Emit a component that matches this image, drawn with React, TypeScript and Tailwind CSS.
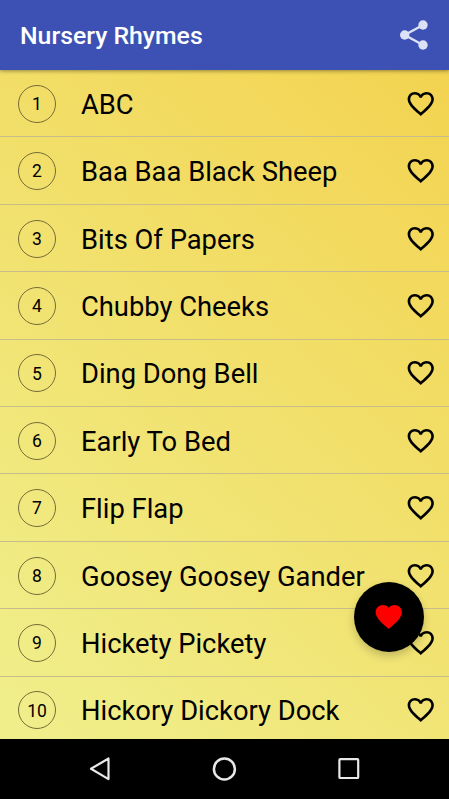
import { useState } from 'react';

const rhymes = [
  'ABC',
  'Baa Baa Black Sheep',
  'Bits Of Papers',
  'Chubby Cheeks',
  'Ding Dong Bell',
  'Early To Bed',
  'Flip Flap',
  'Goosey Goosey Gander',
  'Hickety Pickety',
  'Hickory Dickory Dock',
];

const HEART =
  'M12 21.35l-1.45-1.32C5.4 15.36 2 12.28 2 8.5 2 5.42 4.42 3 7.5 3c1.74 0 3.41.81 4.5 2.09C13.09 3.81 14.76 3 16.5 3 19.58 3 22 5.42 22 8.5c0 3.78-3.4 6.86-8.55 11.54L12 21.35z';

const HEART_BORDER =
  'M16.5 3c-1.74 0-3.41.81-4.5 2.09C10.91 3.81 9.24 3 7.5 3 4.42 3 2 5.42 2 8.5c0 3.78 3.4 6.86 8.55 11.54L12 21.35l1.45-1.32C18.6 15.36 22 12.28 22 8.5 22 5.42 19.58 3 16.5 3zm-4.4 15.55l-.1.1-.1-.1C7.14 14.24 4 11.39 4 8.5 4 6.5 5.5 5 7.5 5c1.54 0 3.04.99 3.57 2.36h1.87C13.46 5.99 14.96 5 16.5 5c2 0 3.5 1.5 3.5 3.5 0 2.89-3.14 5.74-7.9 10.05z';

function Heart({ filled = false }: { filled?: boolean }) {
  return (
    <svg viewBox="0 0 24 24" className="w-[31.5px] h-[31.5px]" fill="currentColor">
      <path d={filled ? HEART : HEART_BORDER} />
    </svg>
  );
}

function ShareIcon() {
  return (
    <svg viewBox="0 0 30 30" className="w-[30px] h-[30px]" fill="currentColor">
      <path d="M24 5L5.7 15 24 25" fill="none" stroke="currentColor" strokeWidth="2.4" />
      <circle cx="24" cy="5" r="4.7" />
      <circle cx="5.7" cy="15" r="4.7" />
      <circle cx="24" cy="25" r="4.7" />
    </svg>
  );
}

export default function App() {
  const [favorites, setFavorites] = useState<number[]>([]);

  const toggle = (i: number) =>
    setFavorites((prev) => (prev.includes(i) ? prev.filter((n) => n !== i) : [...prev, i]));

  return (
    <div className="relative w-[449px] h-[799px] flex flex-col overflow-hidden bg-black font-[Roboto,sans-serif]">
      {/* App bar */}
      <header className="relative z-10 h-[70px] shrink-0 flex items-center justify-between pl-5 pr-[20px] bg-[#3d51b4] shadow-[0_1px_4px_rgba(0,0,0,0.4)]">
        <h1 className="pt-px text-[24.8px] leading-[30px] font-medium text-white">Nursery Rhymes</h1>
        <button aria-label="Share" className="text-[#dce1f7]">
          <ShareIcon />
        </button>
      </header>

      {/* Rhyme list */}
      <ul className="h-[669px] shrink-0 overflow-hidden bg-linear-[222deg] from-[#f3d350] to-[#f0ee8a] to-95%">
        {rhymes.map((title, i) => (
          <li
            key={title}
            className="h-[67.42px] flex items-center pl-[18px] pr-[12.5px] border-b border-[#c8bb8c]"
          >
            <span className="w-[38px] h-[38px] mt-px shrink-0 flex items-center justify-center rounded-full border-[1.2px] border-[#756c38] pt-[2px] text-[17.5px] leading-none text-black">
              {i + 1}
            </span>
            <span className="flex-1 ml-[25px] pt-[3px] text-[27.35px] leading-8 whitespace-nowrap text-black">
              {title}
            </span>
            <button aria-label="Favorite" onClick={() => toggle(i)} className="pt-[0.5px] text-black">
              <Heart filled={favorites.includes(i)} />
            </button>
          </li>
        ))}
      </ul>

      {/* Favorites button */}
      <button
        aria-label="Favorites"
        className="absolute right-[25px] bottom-[147px] w-[70px] h-[70px] flex items-center justify-center rounded-full bg-black text-[#ff0000] shadow-[0_4px_8px_rgba(0,0,0,0.2)]"
      >
        <Heart filled />
      </button>

      {/* System navigation */}
      <nav className="flex-1 flex items-center justify-between pl-[87px] pr-[87px] bg-black text-[#e8e8e8]">
        <svg viewBox="0 0 24 26" className="w-6 h-[26px]" fill="none" stroke="currentColor">
          <path d="M21.5 2.5v20.6L4 12.8z" strokeWidth="2.2" strokeLinejoin="round" />
        </svg>
        <svg viewBox="0 0 26 26" className="w-[26px] h-[26px]" fill="none" stroke="currentColor">
          <circle cx="13.4" cy="13" r="10.5" strokeWidth="2.5" />
        </svg>
        <svg viewBox="0 0 26 26" className="w-[26px] h-[26px]" fill="none" stroke="currentColor">
          <rect x="3.4" y="3.2" width="18.8" height="18.8" rx="0.8" strokeWidth="2.2" />
        </svg>
      </nav>
    </div>
  );
}
